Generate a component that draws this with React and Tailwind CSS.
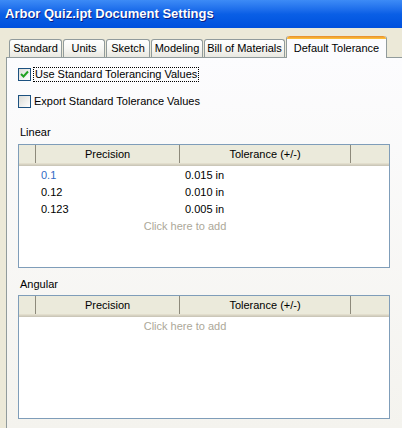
import React from "react";

const font = { fontFamily: '"Liberation Sans", Arial, sans-serif' };

function Tab({ label, w, selected }) {
  if (selected) {
    return (
      <div
        className="relative z-10 -mb-px flex h-[22px] flex-col rounded-t-[3px] border-x border-[#919b9c] bg-[#fcfcfe]"
        style={{ width: w }}
      >
        <div className="h-[3px] rounded-t-[3px] bg-gradient-to-b from-[#e68b2c] to-[#ffc73c]" />
        <div className="flex flex-1 items-start justify-center pt-[1px] text-[11px] text-black">{label}</div>
      </div>
    );
  }
  return (
    <div
      className="flex h-[18px] items-center justify-center rounded-t-[3px] border border-b-0 border-[#919b9c] bg-gradient-to-b from-[#ffffff] via-[#f7f7f4] to-[#e9e8e1] text-[11px] text-black"
      style={{ width: w }}
    >
      {label}
    </div>
  );
}

function Checkbox({ checked }) {
  return (
    <div className="flex h-[13px] w-[13px] items-center justify-center border border-[#1c5180] bg-gradient-to-br from-[#dcdcd7] to-[#ffffff]">
      {checked && (
        <svg width="9" height="9" viewBox="0 0 9 9">
          <path d="M1 4 L3.5 6.5 L8 1.5" stroke="#21a121" strokeWidth="2" fill="none" />
        </svg>
      )}
    </div>
  );
}

function HeaderCell({ children, w, grow }) {
  return (
    <div
      className={
        "relative flex h-full items-center justify-center border-r border-[#8d8a7b] text-[11px] text-black " +
        (grow ? "flex-1 border-r-0" : "")
      }
      style={grow ? undefined : { width: w }}
    >
      {children}
    </div>
  );
}

function Table({ rows }) {
  return (
    <div className="ml-[11px] flex h-[124px] w-[372px] flex-col border border-[#7f9db9] bg-white">
      <div className="flex h-[21px] flex-col">
        <div className="flex h-[18px] bg-[#ebeadb]">
          <HeaderCell w={17} />
          <HeaderCell w={144}>Precision</HeaderCell>
          <HeaderCell w={171}>Tolerance (+/-)</HeaderCell>
          <HeaderCell grow />
        </div>
        <div className="h-px bg-[#e2decd]" />
        <div className="h-px bg-[#d6d2c2]" />
        <div className="h-px bg-[#cbc7b8]" />
      </div>
      <div className="flex w-[332px] flex-col pt-px">
        {rows.map((r, i) => (
          <div key={i} className="flex h-[17px] items-center text-[11px]">
            <div className="w-[17px]" />
            <div className={"w-[144px] pl-[5px] " + (i === 0 ? "text-[#316ac5]" : "text-black")}>{r[0]}</div>
            <div className="w-[171px] pl-[5px] text-black">{r[1]}</div>
          </div>
        ))}
        <div className="flex h-[17px] items-center justify-center text-[11px] text-[#aca899]">Click here to add</div>
      </div>
    </div>
  );
}

export default function App() {
  return (
    <div className="h-[428px] w-[402px] overflow-hidden bg-[#ece9d8]" style={font}>
      <div className="flex h-[28px] items-center bg-gradient-to-b from-[#3d8bf6] via-[#0a5fe6] to-[#0050dd] pl-[5px]">
        <span
          className="text-[13px] font-bold text-white"
          style={{ textShadow: "1px 1px 0 #0a1f86" }}
        >
          Arbor Quiz.ipt Document Settings
        </span>
      </div>
      <div className="flex flex-col pl-[6px]">
        <div className="flex h-[29px] items-end gap-px pl-[3px]">
          <Tab label="Standard" w={53} />
          <Tab label="Units" w={42} />
          <Tab label="Sketch" w={44} />
          <Tab label="Modeling" w={52} />
          <Tab label="Bill of Materials" w={81} />
          <Tab label="Default Tolerance" w={101} selected />
        </div>
        <div className="flex h-[371px] flex-col border-l border-t border-[#919b9c] bg-gradient-to-b from-[#fcfcfe] to-[#f4f3ee]">
          <div className="ml-[11px] mt-[9px] flex items-center gap-[2px]">
            <Checkbox checked />
            <div className="border border-dotted border-black px-px text-[11px] leading-[13px] text-black">
              Use Standard Tolerancing Values
            </div>
          </div>
          <div className="ml-[11px] mt-[13px] flex items-center gap-[3px]">
            <Checkbox />
            <div className="text-[11px] leading-[13px] text-black">Export Standard Tolerance Values</div>
          </div>
          <div className="ml-[13px] mt-[18px] text-[11px] leading-[13px] text-black">Linear</div>
          <div className="mt-[5px]">
            <Table
              rows={[
                ["0.1", "0.015 in"],
                ["0.12", "0.010 in"],
                ["0.123", "0.005 in"],
              ]}
            />
          </div>
          <div className="ml-[13px] mt-[10px] text-[11px] leading-[13px] text-black">Angular</div>
          <div className="mt-[4px]">
            <Table rows={[]} />
          </div>
        </div>
      </div>
    </div>
  );
}
